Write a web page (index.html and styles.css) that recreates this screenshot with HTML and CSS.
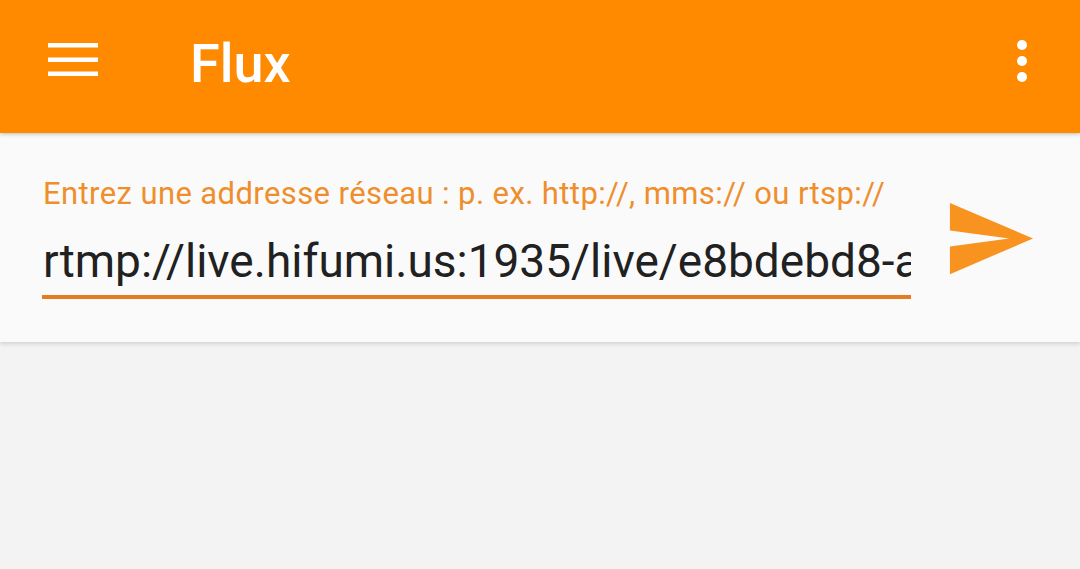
FILE: index.html
```html
<!DOCTYPE html>
<html lang="fr">
<head>
<meta charset="utf-8">
<title>Flux</title>
<link rel="stylesheet" href="styles.css">
</head>
<body>
<header class="appbar">
  <svg class="menu-icon" width="50" height="34" viewBox="0 0 50 34" aria-hidden="true">
    <rect x="0" y="0" width="50" height="4.5" fill="#fff"/>
    <rect x="0" y="14.5" width="50" height="4.5" fill="#fff"/>
    <rect x="0" y="28.5" width="50" height="4.5" fill="#fff"/>
  </svg>
  <h1 class="title">Flux</h1>
  <svg class="more-icon" width="12" height="44" viewBox="0 0 12 44" aria-hidden="true">
    <circle cx="6" cy="6" r="5" fill="#fff"/>
    <circle cx="6" cy="22" r="5" fill="#fff"/>
    <circle cx="6" cy="38" r="5" fill="#fff"/>
  </svg>
</header>
<main class="page">
  <section class="card">
    <div class="field">
      <div class="label">Entrez une addresse réseau : p. ex. http://, mms:// ou rtsp://</div>
      <div class="input">rtmp://live.hifumi.us:1935/live/e8bdebd8-a</div>
    </div>
    <svg class="send-icon" width="95" height="95" viewBox="0 0 24 24" aria-hidden="true">
      <path d="M2.01 21L23 12 2.01 3 2 10l15 2-15 2z" fill="#F7931E"/>
    </svg>
  </section>
</main>
</body>
</html>
```
FILE: styles.css
```css
html, body {
  margin: 0;
  padding: 0;
}
body {
  background: #F3F3F3;
  font-family: Roboto, "Liberation Sans", Arial, sans-serif;
  height: 569px;
  overflow: hidden;
}
.appbar {
  height: 133px;
  background: #FF8A00;
  display: flex;
  align-items: flex-start;
  box-shadow: 0 1px 4px rgba(0,0,0,0.25);
  position: relative;
  z-index: 2;
}
.menu-icon {
  margin: 43px 0 0 48px;
  flex: none;
}
.title {
  margin: 32px 0 0 92px;
  font-size: 54px;
  line-height: 64px;
  font-weight: 500;
  color: #FFFFFF;
  flex: 1;
}
.more-icon {
  margin: 39px 52px 0 0;
  flex: none;
}
.page {
  display: block;
}
.card {
  height: 209px;
  box-sizing: border-box;
  background: #FAFAFA;
  box-shadow: 0 2px 4px rgba(0,0,0,0.14);
  display: flex;
  align-items: flex-start;
  padding: 44px 0 0 42px;
  position: relative;
  z-index: 1;
}
.field {
  width: 869px;
  flex: none;
}
.label {
  font-size: 31px;
  line-height: 34px;
  letter-spacing: 0.4px;
  color: #EE8E2C;
  padding-left: 1px;
  white-space: nowrap;
}
.input {
  margin-top: 23px;
  font-size: 46px;
  line-height: 54px;
  color: #212121;
  white-space: nowrap;
  overflow: hidden;
  padding-left: 1px;
  padding-bottom: 7px;
  border-bottom: 4px solid #E57C20;
}
.send-icon {
  flex: none;
  margin: 14px 0 0 31px;
}
```
